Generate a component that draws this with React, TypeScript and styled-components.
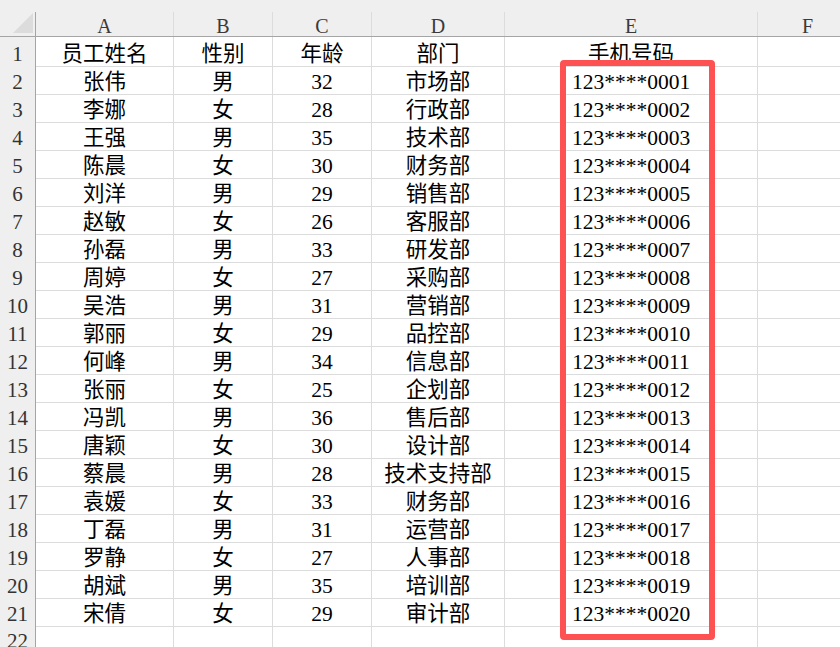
import React from "react";
import styled, { createGlobalStyle } from "styled-components";

const Global = createGlobalStyle`
  html, body { margin: 0; padding: 0; background: #ffffff; overflow: hidden; }
  #root { width: 840px; height: 647px; overflow: hidden; }
`;

const COLS = "36px 138px 99px 99px 133px 253px 100px";

const Sheet = styled.div`
  position: relative;
  width: 840px;
  height: 647px;
  overflow: hidden;
  font-family: "Liberation Serif", "Noto Sans CJK SC", serif;
  font-size: 21.5px;
  color: #000;
`;

const HeaderRow = styled.div`
  display: grid;
  grid-template-columns: ${COLS};
  height: 37px;
  background: #efefef;
  border-bottom: 1px solid #a5a5a5;
  box-sizing: border-box;
  padding-top: 12px;
`;

const ColHead = styled.div<{ $corner?: boolean }>`
  box-sizing: border-box;
  display: flex;
  align-items: center;
  justify-content: center;
  border-right: 1px solid ${(p) => (p.$corner ? "#a5a5a5" : "#dcdcdc")};
  color: #3a3a3a;
  font-size: 20px;
  line-height: 1;
  padding-top: 4px;
  position: relative;
`;

const CornerTri = styled.svg`
  position: absolute;
  left: 13px;
  top: 1px;
`;

const Row = styled.div`
  display: grid;
  grid-template-columns: ${COLS};
  height: 28px;
`;

const RowHead = styled.div`
  box-sizing: border-box;
  background: #efefef;
  border-right: 1px solid #a5a5a5;
  border-bottom: 1px solid #dedede;
  display: flex;
  align-items: center;
  justify-content: center;
  color: #333;
  font-size: 21px;
  line-height: 1;
  padding-top: 6px;
`;

const Cell = styled.div`
  box-sizing: border-box;
  border-right: 1px solid #dcdcdc;
  border-bottom: 1px solid #dcdcdc;
  display: flex;
  align-items: center;
  justify-content: center;
  white-space: nowrap;
  padding-top: 7px;
  line-height: 1;
`;

const Highlight = styled.div`
  position: absolute;
  left: 560px;
  top: 60px;
  width: 155px;
  height: 580px;
  box-sizing: border-box;
  border: 6px solid #fe5151;
  border-radius: 4px;
  pointer-events: none;
`;

const data: [string, string, string, string][] = [
  ["张伟", "男", "32", "市场部"],
  ["李娜", "女", "28", "行政部"],
  ["王强", "男", "35", "技术部"],
  ["陈晨", "女", "30", "财务部"],
  ["刘洋", "男", "29", "销售部"],
  ["赵敏", "女", "26", "客服部"],
  ["孙磊", "男", "33", "研发部"],
  ["周婷", "女", "27", "采购部"],
  ["吴浩", "男", "31", "营销部"],
  ["郭丽", "女", "29", "品控部"],
  ["何峰", "男", "34", "信息部"],
  ["张丽", "女", "25", "企划部"],
  ["冯凯", "男", "36", "售后部"],
  ["唐颖", "女", "30", "设计部"],
  ["蔡晨", "男", "28", "技术支持部"],
  ["袁媛", "女", "33", "财务部"],
  ["丁磊", "男", "31", "运营部"],
  ["罗静", "女", "27", "人事部"],
  ["胡斌", "男", "35", "培训部"],
  ["宋倩", "女", "29", "审计部"],
];

const rows: string[][] = [
  ["员工姓名", "性别", "年龄", "部门", "手机号码", ""],
  ...data.map((d, i) => [...d, `123****${String(i + 1).padStart(4, "0")}`, ""]),
  ["", "", "", "", "", ""],
];

export default function App() {
  return (
    <>
      <Global />
      <Sheet>
        <HeaderRow>
          <ColHead $corner>
            <CornerTri width="20" height="20" viewBox="0 0 20 20">
              <polygon points="20,0 20,20 0,20" fill="#dcdcdc" />
            </CornerTri>
          </ColHead>
          {["A", "B", "C", "D", "E", "F"].map((c) => (
            <ColHead key={c}>{c}</ColHead>
          ))}
        </HeaderRow>
        {rows.map((r, i) => (
          <Row key={i}>
            <RowHead>{i + 1}</RowHead>
            {r.map((v, j) => (
              <Cell key={j}>{v}</Cell>
            ))}
          </Row>
        ))}
        <Highlight />
      </Sheet>
    </>
  );
}
